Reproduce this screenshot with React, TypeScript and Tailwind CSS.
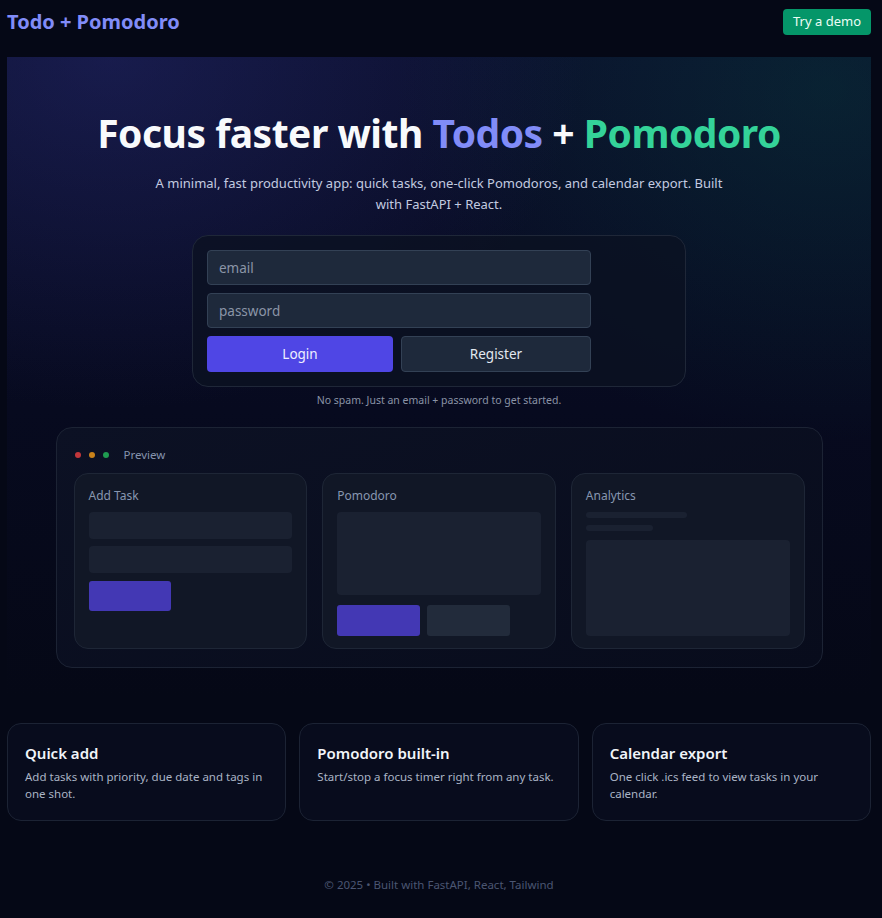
import React from "react";

const font = { fontFamily: '"Noto Sans", "Open Sans", sans-serif' };

function Dots() {
  return (
    <div className="flex items-center gap-[8px]">
      <span className="h-[6px] w-[6px] rounded-full bg-[#c2363b]" />
      <span className="h-[6px] w-[6px] rounded-full bg-[#c9821a]" />
      <span className="h-[6px] w-[6px] rounded-full bg-[#1f9b50]" />
    </div>
  );
}

function MiniCard({ title, children }: { title: string; children: React.ReactNode }) {
  return (
    <div className="h-[176px] rounded-[14px] border border-[#1e2636] bg-[#111726] px-[14px] pt-[13px]">
      <div className="mb-[7px] text-[12px] leading-[18px] text-[#8796b0]">{title}</div>
      {children}
    </div>
  );
}

function Feature({ title, text }: { title: string; text: string }) {
  return (
    <div className="h-[98px] rounded-[14px] border border-[#1c2334] bg-[#080c1d] px-[17px] pt-[17px]">
      <div className="text-[15px] font-semibold leading-[24px] text-[#f1f5f9]">{title}</div>
      <div className="mt-[3px] text-[11.5px] leading-[17px] text-[#aab4c5]">{text}</div>
    </div>
  );
}

export default function App() {
  return (
    <div className="min-h-[918px] bg-[#050816] pl-[7px] pr-[11px]" style={font}>
      <header className="flex h-[57px] items-start justify-between pt-[8px]">
        <div className="text-[20px] font-bold leading-[28px] text-[#818cf8]">Todo + Pomodoro</div>
        <button className="mt-[1px] h-[26px] rounded-[4px] bg-[#059669] px-[10px] text-[13px] text-[#ecfdf5]">
          Try a demo
        </button>
      </header>

      <section className="bg-[radial-gradient(ellipse_55%_55%_at_12%_0%,rgba(45,48,130,0.38),transparent),radial-gradient(ellipse_50%_55%_at_95%_5%,rgba(6,70,64,0.35),transparent),linear-gradient(to_bottom,#0b0f2c_0%,#070a1f_55%,#050816_100%)] pb-[30px] pt-[50px]">
        <h1 className="text-center text-[39px] font-bold leading-[52px] tracking-[-0.5px] text-[#f8fafc]">
          Focus faster with <span className="text-[#818cf8]">Todos</span> +{" "}
          <span className="text-[#34d399]">Pomodoro</span>
        </h1>
        <p className="mx-auto mt-[14px] max-w-[590px] text-center text-[13px] leading-[21px] text-[#c3cbe0]">
          A minimal, fast productivity app: quick tasks, one-click Pomodoros, and calendar export. Built
          with FastAPI + React.
        </p>

        <div className="mx-auto mt-[20px] w-[494px] rounded-[16px] border border-[#1f2738] bg-[#0b1122]/80 p-[14px]">
          <div className="flex max-w-[384px] flex-col gap-[8px]">
            <input
              placeholder="email"
              className="h-[35px] rounded-[4px] border border-[#334155] bg-[#1e293b] px-[11px] text-[13.5px] text-[#e2e8f0] outline-none placeholder:text-[#8b95a7]"
            />
            <input
              placeholder="password"
              type="password"
              className="h-[35px] rounded-[4px] border border-[#334155] bg-[#1e293b] px-[11px] text-[13.5px] text-[#e2e8f0] outline-none placeholder:text-[#8b95a7]"
            />
            <div className="grid grid-cols-[186px_1fr] gap-[8px]">
              <button className="h-[36px] rounded-[4px] bg-[#4f46e5] text-[13.5px] text-[#eef0ff]">Login</button>
              <button className="h-[36px] rounded-[4px] border border-[#334155] bg-[#1e293b] text-[13.5px] text-[#e2e8f0]">
                Register
              </button>
            </div>
          </div>
        </div>
        <p className="mt-[5px] text-center text-[10.5px] leading-[16px] text-[#8a93a6]">
          No spam. Just an email + password to get started.
        </p>

        <div className="mx-auto mt-[19px] w-[767px] rounded-[16px] border border-[#1c2334] bg-[linear-gradient(160deg,#0c1124,#080c1c)] px-[17px] pb-[18px] pt-[19px]">
          <div className="mb-[10px] flex h-[16px] items-center">
            <div className="ml-[1px]">
              <Dots />
            </div>
            <span className="ml-[15px] text-[11.5px] text-[#8593ad]">Preview</span>
          </div>
          <div className="grid grid-cols-3 gap-[15px]">
            <MiniCard title="Add Task">
              <div className="flex flex-col gap-[7px]">
                <div className="h-[27px] rounded-[4px] bg-[#1a2131]" />
                <div className="h-[27px] rounded-[4px] bg-[#1a2131]" />
                <div className="mt-[1px] h-[30px] w-[82px] rounded-[3px] bg-[#4338b4]" />
              </div>
            </MiniCard>
            <MiniCard title="Pomodoro">
              <div className="h-[83px] rounded-[4px] bg-[#1a2131]" />
              <div className="mt-[10px] flex gap-[7px]">
                <div className="h-[31px] w-[83px] rounded-[3px] bg-[#4338b4]" />
                <div className="h-[31px] w-[83px] rounded-[3px] bg-[#222b3b]" />
              </div>
            </MiniCard>
            <MiniCard title="Analytics">
              <div className="h-[6px] w-[101px] rounded-full bg-[#1a2131]" />
              <div className="mt-[7px] h-[6px] w-[67px] rounded-full bg-[#1a2131]" />
              <div className="mt-[9px] h-[96px] rounded-[4px] bg-[#1a2131]" />
            </MiniCard>
          </div>
        </div>
      </section>

      <div className="mt-[25px] grid grid-cols-3 gap-[13px]">
        <Feature title="Quick add" text="Add tasks with priority, due date and tags in one shot." />
        <Feature title="Pomodoro built-in" text="Start/stop a focus timer right from any task." />
        <Feature title="Calendar export" text="One click .ics feed to view tasks in your calendar." />
      </div>

      <footer className="mt-[56px] pb-[25px] text-center text-[11.5px] leading-[16px] text-[#4b5672]">
        © 2025 • Built with FastAPI, React, Tailwind
      </footer>
    </div>
  );
}
